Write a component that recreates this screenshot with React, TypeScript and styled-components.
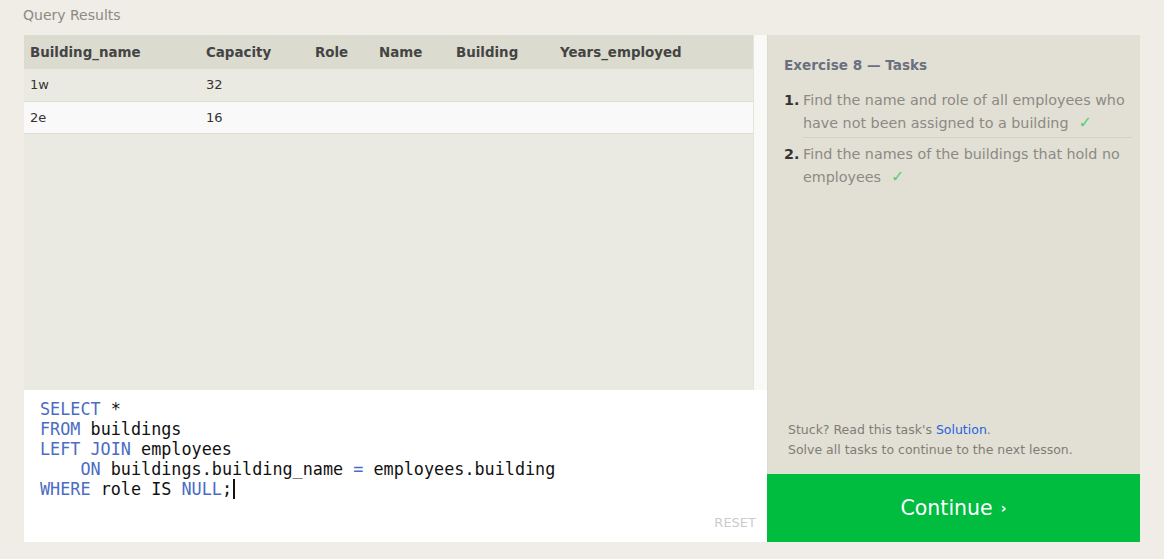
import React from "react";
import styled, { createGlobalStyle } from "styled-components";

const Global = createGlobalStyle`
  html, body { margin: 0; padding: 0; background: #efede6; }
  body { font-family: Tahoma, "DejaVu Sans", sans-serif; }
  * { box-sizing: border-box; }
`;

const Page = styled.div`
  width: 1164px;
  height: 559px;
  padding: 5px 24px 17px 24px;
  display: flex;
  flex-direction: column;
  overflow: hidden;
`;

const Title = styled.div`
  font-size: 14px;
  color: #8a8a85;
  height: 30px;
  line-height: 20px;
  margin-left: -1px;
`;

const Main = styled.div`
  flex: 1;
  display: flex;
`;

const LeftCol = styled.div`
  width: 743px;
  display: flex;
  flex-direction: column;
`;

const Results = styled.div`
  height: 355px;
  display: flex;
  background: #ebeae2;
`;

const TableArea = styled.div`
  flex: 1;
`;

const ScrollTrack = styled.div`
  width: 14px;
  background: #f9f9f8;
  border-left: 1px solid #e4e3dc;
`;

const Table = styled.table`
  width: 100%;
  border-collapse: collapse;
  table-layout: fixed;
`;

const Th = styled.th<{ $w: number }>`
  width: ${(p) => p.$w}px;
  text-align: left;
  font-weight: bold;
  font-size: 13.4px;
  color: #444;
  background: #dcdbcf;
  height: 34px;
  padding: 0 0 0 6px;
`;

const Tr = styled.tr<{ $alt?: boolean }>`
  background: ${(p) => (p.$alt ? "#f9f9f9" : "#ebeae2")};
  border-bottom: 1px solid #dddcd5;
`;

const Td = styled.td`
  font-size: 13px;
  color: #333;
  height: 32px;
  padding: 0 0 0 6px;
`;

const Editor = styled.div`
  flex: 1;
  background: #fff;
  position: relative;
  padding: 9px 16px;
  font-family: "DejaVu Sans Mono", monospace;
  font-size: 16.8px;
  line-height: 20px;
  color: #111;
  white-space: pre;
`;

const Kw = styled.span`
  color: #4a6cc4;
`;

const Cursor = styled.span`
  display: inline-block;
  width: 2px;
  height: 20px;
  background: #111;
  vertical-align: top;
  margin-left: 1px;
`;

const Reset = styled.div`
  position: absolute;
  right: 11px;
  bottom: 12px;
  font-family: Tahoma, "DejaVu Sans", sans-serif;
  font-size: 13px;
  color: #cccccc;
  line-height: 14px;
`;

const RightCol = styled.div`
  width: 373px;
  display: flex;
  flex-direction: column;
`;

const Tasks = styled.div`
  flex: 1;
  background: #e2e0d4;
  padding: 20px 8px 14px 16px;
  display: flex;
  flex-direction: column;
  justify-content: space-between;
  border-left: 1px solid #dcdacd;
`;

const TasksTitle = styled.div`
  font-size: 13.6px;
  color: #6b7080;
  font-weight: bold;
  line-height: 20px;
  margin-bottom: 14px;
`;

const TaskList = styled.ol`
  margin: 0;
  padding: 0;
  list-style: none;
`;

const Task = styled.li<{ $first?: boolean }>`
  display: flex;
  font-size: 14.3px;
  line-height: 23px;
  color: #8b8a85;
  padding: ${(p) => (p.$first ? "0 0 4px 0" : "1px 0 0 0")};
`;

const Num = styled.span`
  width: 19px;
  flex: none;
  font-weight: bold;
  color: #333;
`;

const TaskText = styled.span<{ $first?: boolean }>`
  flex: 1;
  ${(p) => (p.$first ? "border-bottom: 1px solid #d4d2c6; padding-bottom: 2px;" : "")}
`;

const Check = styled.span`
  color: #58cc74;
  margin-left: 10px;
  font-size: 16px;
  font-weight: bold;
  line-height: 1;
`;

const Help = styled.div`
  font-size: 12.5px;
  line-height: 20px;
  color: #807c77;
  padding-left: 4px;
`;

const Link = styled.span`
  color: #1f63e0;
`;

const Continue = styled.div`
  height: 68px;
  background: #00bc3f;
  color: #fff;
  font-size: 20.5px;
  display: flex;
  align-items: center;
  justify-content: center;
  gap: 8px;
`;

const Chev = styled.span`
  font-size: 14px;
  font-weight: bold;
`;

const cols: [string, number][] = [
  ["Building_name", 176],
  ["Capacity", 109],
  ["Role", 64],
  ["Name", 77],
  ["Building", 104],
  ["Years_employed", 199],
];

export default function App() {
  return (
    <Page>
      <Global />
      <Title>Query Results</Title>
      <Main>
        <LeftCol>
          <Results>
            <TableArea>
              <Table>
                <thead>
                  <tr>
                    {cols.map(([c, w]) => (
                      <Th key={c} $w={w}>
                        {c}
                      </Th>
                    ))}
                  </tr>
                </thead>
                <tbody>
                  <Tr>
                    <Td>1w</Td>
                    <Td>32</Td>
                    <Td />
                    <Td />
                    <Td />
                    <Td />
                  </Tr>
                  <Tr $alt>
                    <Td>2e</Td>
                    <Td>16</Td>
                    <Td />
                    <Td />
                    <Td />
                    <Td />
                  </Tr>
                </tbody>
              </Table>
            </TableArea>
            <ScrollTrack />
          </Results>
          <Editor>
            <Kw>SELECT</Kw> *{"\n"}
            <Kw>FROM</Kw> buildings{"\n"}
            <Kw>LEFT JOIN</Kw> employees{"\n"}
            {"    "}
            <Kw>ON</Kw> buildings.building_name <Kw>=</Kw> employees.building{"\n"}
            <Kw>WHERE</Kw> role IS <Kw>NULL</Kw>;<Cursor />
            <Reset>RESET</Reset>
          </Editor>
        </LeftCol>
        <RightCol>
          <Tasks>
            <div>
              <TasksTitle>Exercise 8 — Tasks</TasksTitle>
              <TaskList>
                <Task $first>
                  <Num>1.</Num>
                  <TaskText $first>
                    Find the name and role of all employees who have not been assigned to a building
                    <Check>✓</Check>
                  </TaskText>
                </Task>
                <Task>
                  <Num>2.</Num>
                  <TaskText>
                    Find the names of the buildings that hold no employees
                    <Check>✓</Check>
                  </TaskText>
                </Task>
              </TaskList>
            </div>
            <Help>
              Stuck? Read this task's <Link>Solution</Link>.<br />
              Solve all tasks to continue to the next lesson.
            </Help>
          </Tasks>
          <Continue>
            Continue <Chev>›</Chev>
          </Continue>
        </RightCol>
      </Main>
    </Page>
  );
}
